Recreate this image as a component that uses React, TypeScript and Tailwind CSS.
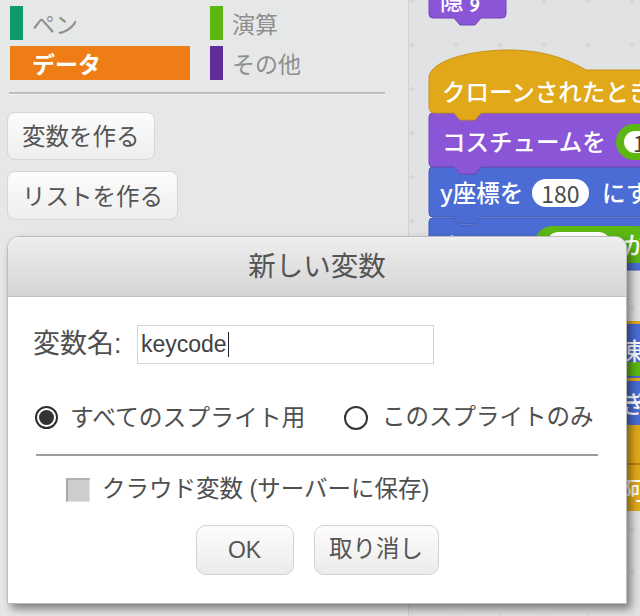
import React from "react";

function Cat({ color, label }: { color: string; label: string }) {
  return (
    <div className="h-[34px] flex items-center">
      <div className={`w-[13px] h-full ${color}`} />
      <span className="ml-[9px] text-[23px] leading-none text-[#8e8e8e]">{label}</span>
    </div>
  );
}

function PaletteButton({ label, w, h }: { label: string; w: string; h: string }) {
  return (
    <div
      className={`${w} ${h} ml-[7px] rounded-[8px] border border-[#d6d6d6] bg-gradient-to-b from-[#fcfcfc] to-[#eeeeee] flex items-center pl-[14px] text-[23.5px] leading-none text-[#555555]`}
    >
      {label}
    </div>
  );
}

function Palette() {
  return (
    <div className="w-[409px] shrink-0 h-full bg-[#e6e8e8] border-r border-[#d0d2d2] pt-[6px]">
      <div className="grid grid-cols-[180px_180px] gap-x-[20px] gap-y-[6px] pl-[10px]">
        <Cat color="bg-[#0e9a6c]" label="ペン" />
        <Cat color="bg-[#5cb712]" label="演算" />
        <div className="h-[34px] bg-[#ee7d16] flex items-center pl-[22px] text-white font-bold text-[23px] leading-none">
          データ
        </div>
        <Cat color="bg-[#632d99]" label="その他" />
      </div>
      <div className="ml-[9px] mt-[12px] w-[376px] h-[3px] bg-[#bdbdbd] border-b border-[#f3f3f3]" />
      <div className="mt-[17px] flex flex-col gap-[11px]">
        <PaletteButton label="変数を作る" w="w-[148px]" h="h-[48px]" />
        <PaletteButton label="リストを作る" w="w-[171px]" h="h-[49px]" />
      </div>
    </div>
  );
}

function BlockText({ children, left, cy, className = "" }: { children: React.ReactNode; left: number; cy: number; className?: string }) {
  return (
    <span
      className={`absolute whitespace-nowrap text-[23.5px] font-medium leading-[30px] text-white ${className}`}
      style={{ left, top: cy - 15 }}
    >
      {children}
    </span>
  );
}

function Canvas() {
  const tab = (y: number) => `H72 L66,${y + 7} H51 L45,${y}`;
  return (
    <div className="relative flex-1 h-full overflow-hidden bg-[#e1e2e3]">
      <svg className="absolute inset-0" width="231" height="616">
        <defs>
          <pattern id="plus" x="0" y="-2" width="44" height="44" patternUnits="userSpaceOnUse">
            <path d="M3,0 V6 M0,3 H6" stroke="#cfd0d1" strokeWidth="1" />
          </pattern>
        </defs>
        <rect x="0" y="0" width="231" height="616" fill="url(#plus)" />
        {/* hide block */}
        <path d={`M20,-10 H97 V14 Q97,18 93,18 ${tab(18)} H24 Q20,18 20,14 Z`} fill="#8a55d7" stroke="#7446b8" strokeWidth="1" />
        {/* blue lower block behind dialog */}
        <path d={`M20,222 Q20,218 24,218 H45 L51,225 H66 L72,218 H240 V270 ${tab(270)} H24 Q20,270 20,266 Z`} fill="#4a6cd4" stroke="#3d5bb8" strokeWidth="1" />
        <rect x="125" y="226" width="120" height="37" rx="18.5" fill="#5cb712" />
        <rect x="137" y="232" width="65" height="25" rx="12.5" fill="#ffffff" />
        {/* blue y block */}
        <path d={`M20,171 Q20,167 24,167 H45 L51,174 H66 L72,167 H240 V217 ${tab(217)} H24 Q20,217 20,213 Z`} fill="#4a6cd4" stroke="#3d5bb8" strokeWidth="1" />
        <rect x="123" y="179" width="57" height="28" rx="14" fill="#ffffff" />
        {/* purple costume */}
        <path d={`M20,117 Q20,113 24,113 H45 L51,120 H66 L72,113 H240 V167 ${tab(167)} H24 Q20,167 20,163 Z`} fill="#8a55d7" stroke="#7446b8" strokeWidth="1" />
        <rect x="207" y="124" width="60" height="36" rx="18" fill="#5cb712" />
        <rect x="215" y="131" width="40" height="22" rx="11" fill="#ffffff" />
        {/* hat */}
        <path d={`M20,76 C24,60 62,50 100,50 C136,50 160,60 177,70 H240 V113 ${tab(113)} H26 Q20,113 20,107 Z`} fill="#e1a91a" stroke="#c7921a" strokeWidth="1" />
        {/* right strip blocks */}
        <rect x="20" y="321" width="220" height="60" fill="#e1a91a" />
        <rect x="20" y="324" width="220" height="54" fill="#4a6cd4" />
        <rect x="190" y="362" width="50" height="14" rx="7" fill="#5cb712" />
        <rect x="20" y="381" width="220" height="44" fill="#4a6cd4" />
        <rect x="20" y="425" width="220" height="38" fill="#e1a91a" />
        <rect x="20" y="463" width="220" height="2" fill="#b3851a" />
        <rect x="20" y="465" width="220" height="46" fill="#e1a91a" />
      </svg>
      <BlockText left={31} cy={0}>隠す</BlockText>
      <BlockText left={33} cy={91}>クローンされたとき</BlockText>
      <BlockText left={33} cy={141}>コスチュームを</BlockText>
      <span className="absolute left-[224px] top-[128px] text-[22px] leading-[28px] text-[#444444]">1</span>
      <BlockText left={31} cy={192}>y座標を</BlockText>
      <span className="absolute left-[123px] top-[179px] w-[57px] h-[28px] flex items-center justify-center text-[23px] leading-none text-[#4a4a4a]">
        180
      </span>
      <BlockText left={193} cy={192}>にする</BlockText>
      <BlockText left={31} cy={246}>大きさを</BlockText>
      <BlockText left={214} cy={244}>か</BlockText>
      <BlockText left={211} cy={350}>凍</BlockText>
      <BlockText left={213} cy={403}>ぎ</BlockText>
      <BlockText left={213} cy={489}>阿</BlockText>
    </div>
  );
}

function Dialog() {
  return (
    <div className="absolute left-[7px] top-[236px] w-[620px] h-[368px] rounded-t-[12px] border border-[#bdbdbd] bg-white shadow-[4px_5px_8px_rgba(0,0,0,0.45)] overflow-hidden flex flex-col font-['Liberation_Sans','Noto_Sans_CJK_JP',sans-serif] text-[#4f4f4f]">
      <div className="h-[60px] shrink-0 bg-gradient-to-b from-[#eeeeee] to-[#d5d5d5] border-b border-[#c0c0c0] flex items-center justify-center text-[27.5px] leading-none text-[#545454]">
        新しい変数
      </div>
      <div className="flex flex-col">
        <div className="mt-[28px] pl-[25px] flex items-center">
          <span className="w-[104px] text-[27px] leading-none">変数名:</span>
          <div className="w-[297px] h-[39px] border border-[#d3d3d3] flex items-center pl-[3px] text-[23px] leading-none text-[#404040]">
            keycode
            <span className="ml-[1px] w-[1px] h-[25px] bg-[#222]" />
          </div>
        </div>
        <div className="mt-[39px] h-[30px] pl-[27px] flex items-center">
          <div className="w-[309px] flex items-center">
            <div className="w-[23px] h-[23px] rounded-full border-[2px] border-[#2e2e2e] p-[2px] flex">
              <div className="flex-1 rounded-full bg-[#333333]" />
            </div>
            <span className="ml-[12px] text-[23.8px] leading-none">すべてのスプライト用</span>
          </div>
          <div className="w-[24px] h-[24px] rounded-full border-[2px] border-[#333333] bg-white" />
          <span className="ml-[14px] text-[23.5px] leading-none">このスプライトのみ</span>
        </div>
        <div className="mt-[21px] ml-[28px] w-[562px] h-[2px] bg-[#9d9d9d]" />
        <div className="mt-[22px] pl-[58px] flex items-center">
          <div className="w-[24px] h-[24px] bg-[#cfcdd0] border-l-[2px] border-t-[2px] border-l-[#a8a8a8] border-t-[#b0b0b0] border-r border-b border-r-[#e2e2e2] border-b-[#e2e2e2]" />
          <span className="ml-[12px] text-[23.5px] leading-none">クラウド変数 (サーバーに保存)</span>
        </div>
        <div className="mt-[23px] flex justify-center gap-[20px]">
          <div className="w-[98px] h-[50px] rounded-[10px] border border-[#d2d2d2] bg-gradient-to-b from-[#fdfdfd] to-[#ebebeb] flex items-center justify-center text-[23px] leading-none text-[#555555]">
            OK
          </div>
          <div className="w-[125px] h-[50px] rounded-[10px] border border-[#d2d2d2] bg-gradient-to-b from-[#fdfdfd] to-[#ebebeb] flex items-center justify-center text-[23.5px] leading-none text-[#555555]">
            取り消し
          </div>
        </div>
      </div>
    </div>
  );
}

export default function App() {
  return (
    <div className="relative w-[640px] h-[616px] overflow-hidden bg-[#e1e2e3] font-['Noto_Sans_CJK_JP',sans-serif]">
      <div className="flex h-full">
        <Palette />
        <Canvas />
      </div>
      <Dialog />
    </div>
  );
}
